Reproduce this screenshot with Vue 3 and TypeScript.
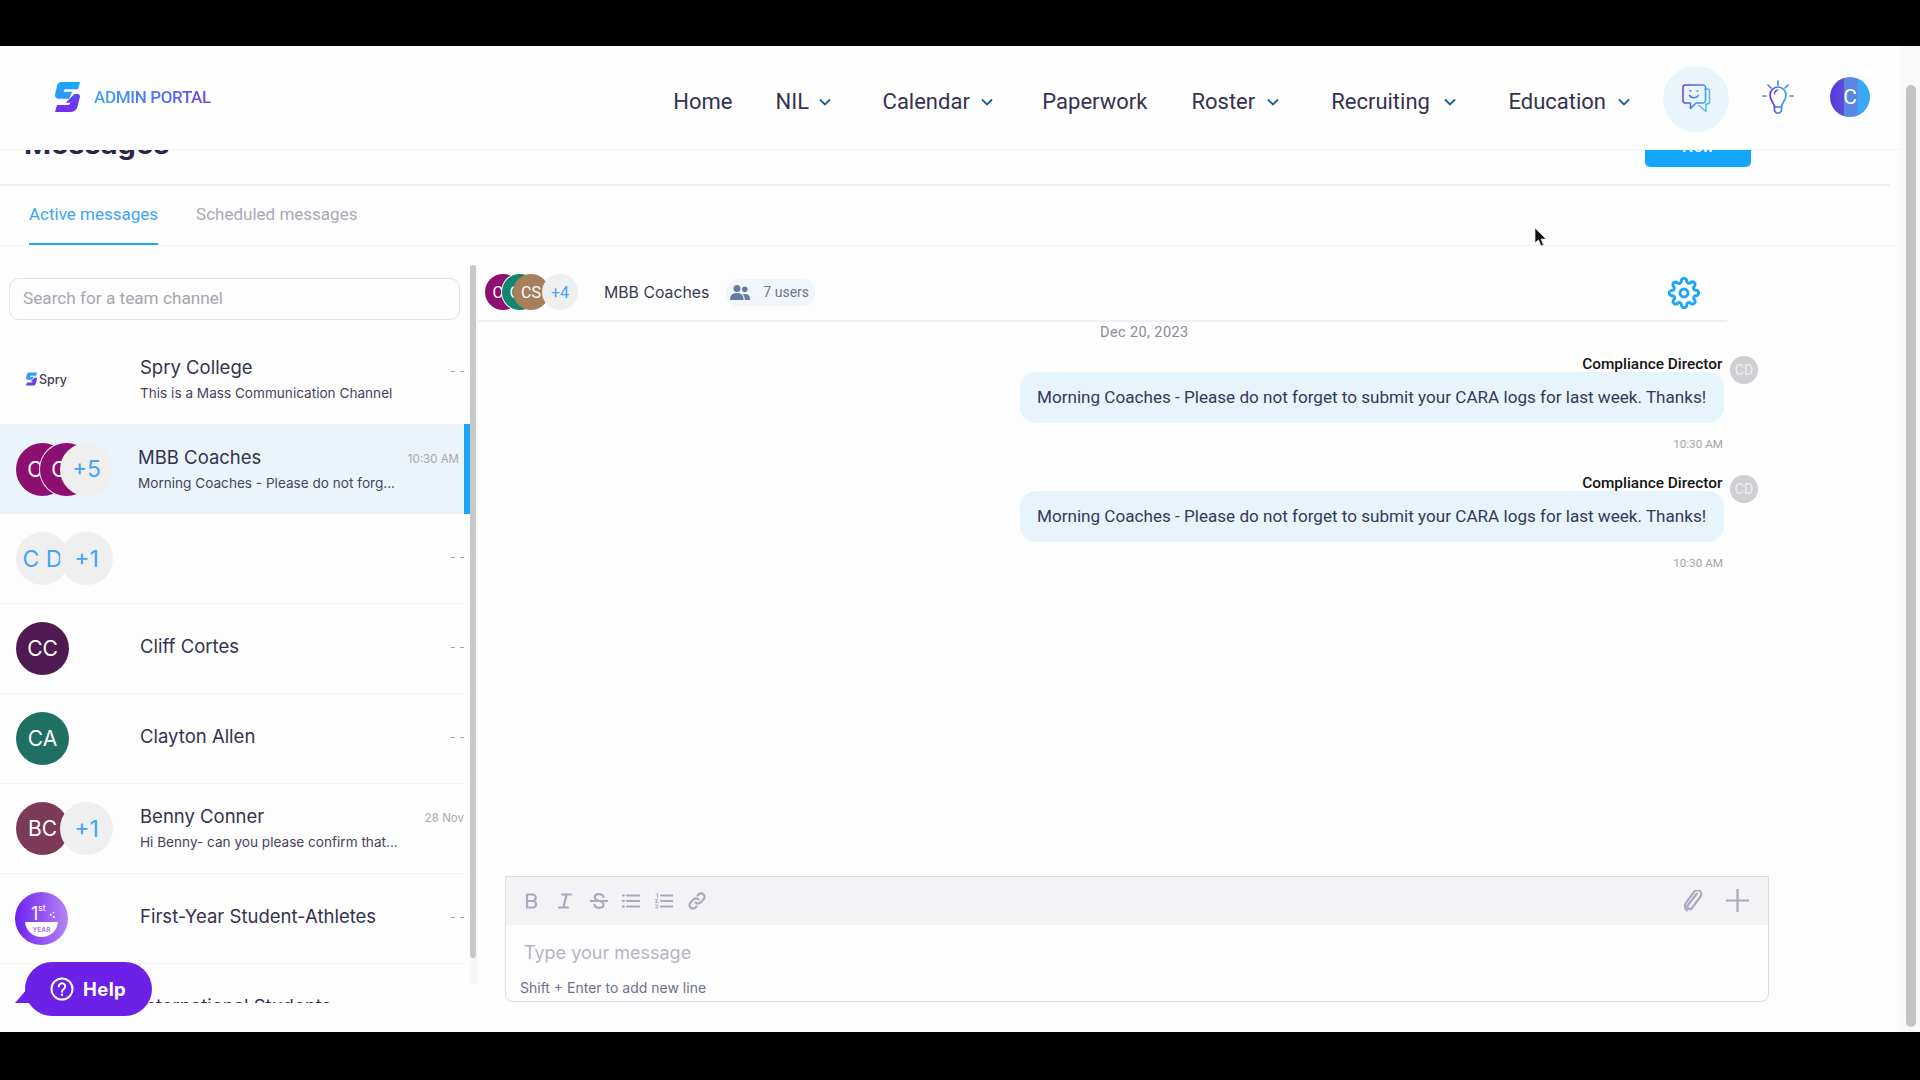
<script setup lang="ts">
interface Avatar {
  label: string
  color?: string
}

interface Channel {
  name: string
  sub?: string
  time?: string
  logo?: 'spry' | 'badge'
  active?: boolean
  avatars: Avatar[]
}

const navItems = [
  { label: 'Home', menu: false },
  { label: 'NIL', menu: true },
  { label: 'Calendar', menu: true },
  { label: 'Paperwork', menu: false },
  { label: 'Roster', menu: true },
  { label: 'Recruiting', menu: true },
  { label: 'Education', menu: true },
]

const channels: Channel[] = [
  { name: 'Spry College', sub: 'This is a Mass Communication Channel', logo: 'spry', avatars: [] },
  {
    name: 'MBB Coaches',
    sub: 'Morning Coaches - Please do not forg...',
    time: '10:30 AM',
    active: true,
    avatars: [{ label: 'CC', color: '#8e0f72' }, { label: 'CC', color: '#8e0f72' }, { label: '+5' }],
  },
  { name: '', avatars: [{ label: 'C D' }, { label: '+1' }] },
  { name: 'Cliff Cortes', avatars: [{ label: 'CC', color: '#4f1a52' }] },
  { name: 'Clayton Allen', avatars: [{ label: 'CA', color: '#1f6f63' }] },
  {
    name: 'Benny Conner',
    sub: 'Hi Benny- can you please confirm that...',
    time: '28 Nov',
    avatars: [{ label: 'BC', color: '#7d3a58' }, { label: '+1' }],
  },
  { name: 'First-Year Student-Athletes', logo: 'badge', avatars: [] },
  { name: 'International Students', avatars: [] },
]

const messages = [
  { author: 'Compliance Director', text: 'Morning Coaches - Please do not forget to submit your CARA logs for last week. Thanks!', time: '10:30 AM' },
  { author: 'Compliance Director', text: 'Morning Coaches - Please do not forget to submit your CARA logs for last week. Thanks!', time: '10:30 AM' },
]
</script>

<template>
  <div class="screen">
    <div class="screen__bar"></div>
    <div class="window">
      <div class="page">
        <header class="topnav">
          <div class="brand">
            <svg class="brand__logo" viewBox="0 0 75 90">
              <defs>
                <linearGradient id="logoA" x1="0" y1="0" x2="0" y2="1">
                  <stop offset="0" stop-color="#18a8f8" />
                  <stop offset="1" stop-color="#2f95f6" />
                </linearGradient>
                <linearGradient id="logoB" x1="0" y1="0" x2="0" y2="1">
                  <stop offset="0" stop-color="#5a4cf0" />
                  <stop offset="1" stop-color="#7a2bf0" />
                </linearGradient>
              </defs>
              <path fill="url(#logoA)" d="M20 0H75L69 22H32Q26 22 26 29H52L42 50H12Q0 50 0 38L6 12Q9 0 20 0Z" />
              <path fill="url(#logoB)" d="M58 36H70Q75 36 75 44L68 72Q64 90 44 90H0L6 69H40Q44 69 46 62H32Z" />
            </svg>
            <span class="brand__name">ADMIN PORTAL</span>
          </div>
          <nav class="topnav__links">
            <a v-for="item in navItems" :key="item.label" class="topnav__link" :class="{ 'topnav__link--menu': item.menu }">
              {{ item.label }}
              <svg v-if="item.menu" class="topnav__chevron" viewBox="0 0 12 8">
                <path d="M1 1.500l5 5 5-5" />
              </svg>
            </a>
          </nav>
          <div class="topnav__chat">
            <svg viewBox="0 0 29 29" width="29" height="29" fill="none" stroke-width="1.500" stroke-linejoin="round" stroke-linecap="round">
              <defs>
                <linearGradient id="chatA" x1="0" y1="0" x2="1" y2="0.400">
                  <stop offset="0" stop-color="#6a35e6" />
                  <stop offset="1" stop-color="#3f9cf2" />
                </linearGradient>
              </defs>
              <path stroke="#55b4f6" d="M23 5h2.500a2 2 0 0 1 2 2v11a2 2 0 0 1-2 2h-1.500v7.500L17 21.500" />
              <path stroke="url(#chatA)" d="M3 1h18a2.500 2.500 0 0 1 2.500 2.500v13a2.500 2.500 0 0 1-2.500 2.500H14L8.500 24.500V19H3a2 2 0 0 1-2-2V3a2 2 0 0 1 2-2z" />
              <path stroke="url(#chatA)" d="M7.500 11.500c2 3 7 3 9 0" />
              <circle cx="8.500" cy="7" r="1" fill="#6a6ae8" stroke="none" />
              <circle cx="15.500" cy="7" r="1" fill="#5a8aee" stroke="none" />
            </svg>
          </div>
          <svg class="topnav__bulb" viewBox="0 0 32 34" fill="none" stroke-width="1.700" stroke-linecap="round" stroke-linejoin="round">
            <defs>
              <linearGradient id="bulbA" gradientUnits="userSpaceOnUse" x1="8" y1="0" x2="24" y2="0">
                <stop offset="0" stop-color="#6a35e6" />
                <stop offset="1" stop-color="#3aa8f6" />
              </linearGradient>
            </defs>
            <path stroke="#3f8fe8" d="M16 1v4M6 5l3 3M26 5l-3 3M1 16h3M28 16h3" />
            <path stroke="url(#bulbA)" d="M12.500 27c0-4-4.500-6-4.500-12a8 8 0 0 1 16 0c0 6-4.500 8-4.500 12z" />
            <path stroke="url(#bulbA)" d="M12.500 27v4l2 2h3l2-2v-4" />
            <path stroke="#5a5ee8" d="M12.500 14c0-2 1-3.500 3-4" stroke-width="1.300" />
          </svg>
          <div class="topnav__user">C</div>
        </header>

        <div class="content">
          <div class="titlebar">
            <h1 class="titlebar__title">Messages</h1>
            <button class="titlebar__new">New</button>
          </div>

          <div class="tabs">
            <span class="tabs__tab tabs__tab--active">Active messages</span>
            <span class="tabs__tab">Scheduled messages</span>
          </div>

          <div class="inbox">
            <aside class="sidebar">
              <div class="sidebar__main">
                <div class="sidebar__search">Search for a team channel</div>
                <div class="sidebar__list">
                  <div
                    v-for="channel in channels"
                    :key="channel.name + channel.avatars.length"
                    class="channel"
                    :class="{ 'channel--active': channel.active }"
                  >
                    <div class="channel__media" :class="{ 'channel__media--three': channel.avatars.length === 3 }">
                      <div v-if="channel.logo === 'spry'" class="spry">
                        <svg viewBox="0 0 75 90" width="11" height="14">
                          <path fill="#2f9bf5" d="M20 0H75L69 22H32Q26 22 26 29H52L42 50H12Q0 50 0 38L6 12Q9 0 20 0Z" />
                          <path fill="#6a3de8" d="M58 36H70Q75 36 75 44L68 72Q64 90 44 90H0L6 69H40Q44 69 46 62H32Z" />
                        </svg>
                        <span>Spry</span>
                      </div>
                      <svg v-else-if="channel.logo === 'badge'" class="badge" viewBox="0 0 53 53">
                        <defs>
                          <linearGradient id="badgeA" x1="0" y1="0" x2="1" y2="0">
                            <stop offset="0" stop-color="#6f22ef" />
                            <stop offset="1" stop-color="#b583f6" />
                          </linearGradient>
                        </defs>
                        <circle cx="26.500" cy="26.500" r="26.500" fill="url(#badgeA)" />
                        <text x="16" y="28" class="badge__one">1</text>
                        <text x="23" y="19" class="badge__st">st</text>
                        <path d="M10 30h33c-1 9-8 15-16.500 15S11 39 10 30z" fill="#fff" />
                        <text x="26.500" y="40" class="badge__year">YEAR</text>
                        <path d="M35 22l1.500 1.500M38 20l1 1M38 24.500l1.500 1" stroke="#fff" stroke-width="1.600" />
                      </svg>
                      <div
                        v-for="(avatar, i) in channel.avatars"
                        :key="i"
                        class="avatar"
                        :class="{ 'avatar--plain': !avatar.color }"
                        :style="avatar.color ? { background: avatar.color } : undefined"
                      >
                        {{ avatar.label }}
                      </div>
                    </div>
                    <div class="channel__body" :class="{ 'channel__body--single': !channel.sub }">
                      <div class="channel__name">{{ channel.name }}</div>
                      <div v-if="channel.sub" class="channel__sub">{{ channel.sub }}</div>
                    </div>
                    <div class="channel__time" :class="{ 'channel__time--none': !channel.time }">{{ channel.time || '- -' }}</div>
                  </div>
                </div>
              </div>
              <div class="sidebar__scroll"><div class="sidebar__thumb"></div></div>
            </aside>

            <section class="thread">
              <div class="thread__head">
                <div class="stack">
                  <div class="stack__item" style="background: #8e0f72">CC</div>
                  <div class="stack__item" style="background: #11866d">CC</div>
                  <div class="stack__item" style="background: #a87f5c">CS</div>
                  <div class="stack__item stack__item--more">+4</div>
                </div>
                <span class="thread__title">MBB Coaches</span>
                <div class="thread__users">
                  <svg viewBox="0 0 20 15" width="20" height="15" fill="#667a9c">
                    <circle cx="7" cy="3.500" r="3.500" />
                    <circle cx="14.800" cy="4.200" r="2.800" />
                    <path d="M0 15c0-5 2.500-7 7-7s6.500 2 6.500 7z" />
                    <path d="M14.800 15H20c0-4-1.500-6-5-6-1 0-1.800.2-2.200.5 1.300 1.300 2 3 2 5.500z" />
                  </svg>
                  <span>7 users</span>
                </div>
                <svg class="thread__gear" viewBox="0 0 24 24" fill="none" stroke="#1ea7f8" stroke-width="2.200" stroke-linecap="round" stroke-linejoin="round">
                  <circle cx="12" cy="12" r="3" />
                  <path d="M19.400 15a1.650 1.650 0 0 0 .33 1.820l.06.06a2 2 0 0 1-2.830 2.830l-.06-.06a1.650 1.650 0 0 0-2.820 1.170V21a2 2 0 0 1-4 0v-.09A1.650 1.650 0 0 0 7.270 19.700l-.06.06a2 2 0 0 1-2.830-2.830l.06-.06a1.650 1.650 0 0 0-1.170-2.820H3a2 2 0 0 1 0-4h.09A1.650 1.650 0 0 0 4.300 7.270l-.06-.06a2 2 0 0 1 2.830-2.830l.06.06a1.650 1.650 0 0 0 1.820.33H9a1.650 1.650 0 0 0 1-1.510V3a2 2 0 0 1 4 0v.09a1.650 1.650 0 0 0 2.820 1.170l.06-.06a2 2 0 0 1 2.830 2.830l-.06.06a1.650 1.650 0 0 0-.33 1.820V9c.26.600.86 1 1.510 1H21a2 2 0 0 1 0 4h-.09c-.65 0-1.250.400-1.510 1z" />
                </svg>
              </div>

              <div class="thread__body">
                <div class="thread__date">Dec 20, 2023</div>
                <div v-for="(message, i) in messages" :key="i" class="message">
                  <div class="message__col">
                    <div class="message__author">{{ message.author }}</div>
                    <div class="message__bubble">{{ message.text }}</div>
                    <div class="message__time">{{ message.time }}</div>
                  </div>
                  <div class="message__avatar">CD</div>
                </div>
              </div>

              <div class="composer">
                <div class="composer__tools">
                  <svg class="tool" viewBox="0 0 14 16" width="14" height="16"><path d="M2 1.500h5.500a3.200 3.200 0 0 1 0 6.500H2zM2 8h6.300a3.300 3.300 0 0 1 0 6.500H2z" /></svg>
                  <svg class="tool" viewBox="0 0 14 16" width="14" height="16"><path d="M4 1.500h9M1 14.500h9M8.500 1.500l-3 13" /></svg>
                  <svg class="tool" viewBox="0 0 18 16" width="18" height="16"><path d="M0 8h18M13.500 4c-.5-1.800-2-2.800-4.500-2.800S4.800 2.500 4.800 4.500c0 4.500 8.700 2.500 8.700 7 0 2.200-2 3.300-4.500 3.300s-4-1-4.500-3" /></svg>
                  <svg class="tool" viewBox="0 0 18 16" width="18" height="16"><path d="M5 2.500h13M5 8h13M5 13.500h13M0 2.500h2M0 8h2M0 13.500h2" /></svg>
                  <svg class="tool" viewBox="0 0 18 16" width="18" height="16"><path d="M6 2.500h12M6 8h12M6 13.500h12" /><path d="M1 1h1.500v3.500M.5 6.500h2L.5 9.500h2.500M.5 12h2.500l-1 1.500 1 1.500H.5" stroke-width="1" /></svg>
                  <svg class="tool" viewBox="0 0 18 18" width="18" height="18"><path d="M7.500 10.500a3.500 3.500 0 0 0 5 0l3-3a3.500 3.500 0 0 0-5-5l-1 1M10.500 7.500a3.500 3.500 0 0 0-5 0l-3 3a3.500 3.500 0 0 0 5 5l1-1" /></svg>
                  <svg class="tool tool--clip" viewBox="0 0 20 22" width="20" height="22" stroke-width="1.300"><path d="M14 3.500L5 15a2.500 2.500 0 0 0 4 3l8.500-11.500a4 4 0 0 0-6.500-4.700L2.500 13.500a6 6 0 0 0 1.500 7" /></svg>
                  <svg class="tool tool--plus" viewBox="0 0 23 23" width="23" height="23" stroke-width="2.500"><path d="M11.500 0v23M0 11.500h23" /></svg>
                </div>
                <div class="composer__input">Type your message</div>
                <div class="composer__hint">Shift + Enter to add new line</div>
              </div>
            </section>
          </div>
        </div>
      </div>

      <div class="scrollbar"><div class="scrollbar__thumb"></div></div>

      <button class="help">
        <svg viewBox="0 0 24 24" width="24" height="24" fill="none" stroke="#fff" stroke-width="2">
          <circle cx="12" cy="12" r="10.500" />
          <path d="M8.800 9.500a3.200 3.200 0 1 1 4.900 2.700c-1 .6-1.700 1.200-1.700 2.500" stroke-linecap="round" />
          <circle cx="12" cy="17.800" r="1.200" fill="#fff" stroke="none" />
        </svg>
        <span>Help</span>
      </button>

      <svg class="cursor" viewBox="0 0 14 20" width="14" height="20">
        <path d="M1 0v15l3.500-3.200L7 18l2.500-1L7 11h5z" fill="#111" stroke="#ddd" stroke-width="0.800" />
      </svg>
    </div>
    <div class="screen__bar screen__bar--bottom"></div>
  </div>
</template>

<style>
html,
body {
  margin: 0;
  background: #000;
}
</style>

<style scoped>
.screen {
  display: flex;
  flex-direction: column;
  width: 1920px;
  height: 1080px;
  overflow: hidden;
  background: #000;
  font-family: Roboto, "Liberation Sans", sans-serif;
  color: #2f2c4a;
}

.screen__bar {
  flex: 0 0 46px;
  background: #000;
}

.screen__bar--bottom {
  flex-basis: 48px;
}

.window {
  position: relative;
  display: flex;
  flex: 1;
  min-height: 0;
  background: #fdfdfd;
}

.page {
  display: flex;
  flex-direction: column;
  flex: 1;
  min-width: 0;
}

.topnav {
  position: relative;
  z-index: 2;
  display: flex;
  align-items: center;
  flex: 0 0 104px;
  box-sizing: border-box;
  padding: 0 30px 0 55px;
  background: #fefefe;
  border-bottom: 1px solid #f4f4f4;
}

.brand {
  display: flex;
  align-items: center;
  gap: 14px;
  margin-top: -2px;
}

.brand__logo {
  width: 25px;
  height: 30px;
}

.brand__name {
  font-size: 17px;
  font-weight: 500;
  letter-spacing: -0.35px;
  background: linear-gradient(90deg, #3aa6f5, #6a45e8);
  -webkit-background-clip: text;
  background-clip: text;
  color: transparent;
}

.topnav__links {
  display: flex;
  align-items: center;
  gap: 44px;
  margin-left: auto;
  margin-top: 8px;
}

.topnav__link {
  display: flex;
  align-items: center;
  gap: 12px;
  font-size: 22px;
  color: #35324f;
}

.topnav__link--menu {
  padding-right: 8px;
}

.topnav__link:nth-child(1) {
  margin-right: -1px;
}

.topnav__link:nth-child(2) {
  gap: 10px;
  padding-right: 7.500px;
}

.topnav__link:nth-child(3) {
  gap: 11px;
  padding-right: 5.500px;
}

.topnav__link:nth-child(6) {
  gap: 14px;
  padding-right: 8.500px;
}

.topnav__chevron {
  width: 12px;
  height: 8px;
  fill: none;
  stroke: #1d5f8a;
  stroke-width: 1.800;
}

.topnav__chat {
  display: flex;
  align-items: center;
  justify-content: center;
  width: 66px;
  height: 66px;
  margin-left: 25px;
  margin-top: 2px;
  border-radius: 50%;
  background: #e9f4fb;
}

.topnav__bulb {
  width: 32px;
  height: 34px;
  margin-left: 33px;
  margin-top: -1px;
}

.topnav__user {
  display: flex;
  align-items: center;
  justify-content: center;
  width: 40px;
  height: 40px;
  margin-left: 36px;
  margin-top: -2px;
  border-radius: 50%;
  background: linear-gradient(90deg, #5a36d8 0%, #5a4fdc 35%, #5b86e4 36%, #5b86e4 68%, #39a8f6 70%);
  color: #fff;
  font-size: 21px;
}

.content {
  display: flex;
  flex-direction: column;
  flex: 1;
  min-height: 0;
  overflow: hidden;
}

.titlebar {
  display: flex;
  justify-content: space-between;
  flex: 0 0 36px;
  box-sizing: border-box;
  margin-right: 10px;
  padding: 0 139px 0 24px;
  border-bottom: 2px solid #f1f1f1;
}

.titlebar__title {
  margin: -25px 0 0;
  font-family: Inter, sans-serif;
  font-size: 29px;
  font-weight: 700;
  line-height: 38px;
  color: #2b2745;
}

.titlebar__new {
  width: 106px;
  height: 47px;
  margin-top: -30px;
  padding: 6px 0 0;
  border: 0;
  border-radius: 5px;
  background: #12a5fb;
  color: #fff;
  font-family: inherit;
  font-size: 16px;
  font-weight: 500;
}

.tabs {
  display: flex;
  gap: 38px;
  flex: 0 0 59px;
  box-sizing: border-box;
  padding-left: 29px;
  border-bottom: 1px solid #f5f5f5;
}

.tabs__tab {
  box-sizing: border-box;
  height: 59px;
  padding-top: 18px;
  font-size: 17px;
  line-height: 20px;
  color: #a9a9b6;
}

.tabs__tab--active {
  color: #3fa5f0;
  border-bottom: 2.500px solid #1ea7f8;
}

.inbox {
  display: flex;
  flex: 1;
  min-height: 0;
}

.sidebar {
  display: flex;
  flex: 0 0 478px;
}

.sidebar__main {
  flex: 0 0 470px;
  padding-top: 32px;
}

.sidebar__search {
  box-sizing: border-box;
  width: 451px;
  height: 42px;
  margin-left: 9px;
  padding-left: 13px;
  border: 1px solid #e2e2e8;
  border-radius: 10px;
  font-size: 17.200px;
  line-height: 38px;
  color: #a6a6af;
}

.sidebar__list {
  height: 669px;
  margin-top: 14px;
  overflow: hidden;
}

.channel {
  position: relative;
  display: flex;
  align-items: center;
  box-sizing: border-box;
  width: 465px;
  height: 90px;
  border-bottom: 1px solid #f4f4f4;
  font-family: Inter, sans-serif;
}

.channel--active {
  width: 470px;
  padding-right: 5px;
  background: #ebf4fb;
  border-bottom: 0;
  border-right: 6px solid #1ea7f8;
}

.channel:first-child {
  border-bottom: 0;
}

.channel__media {
  display: flex;
  align-items: center;
  flex: 0 0 124px;
  box-sizing: border-box;
  padding-left: 16px;
}

.avatar {
  position: relative;
  display: flex;
  align-items: center;
  justify-content: center;
  flex: 0 0 53px;
  height: 53px;
  border-radius: 50%;
  font-size: 21px;
  color: #fff;
  white-space: nowrap;
}

.avatar + .avatar {
  margin-left: -9px;
}

.channel__media--three .avatar:nth-child(2) {
  margin-left: -29px;
  box-shadow: 0 0 0 1px #f2e6f0;
}

.channel__media--three .avatar:nth-child(3) {
  margin-left: -33px;
}

.avatar--plain {
  background: #efefef;
  color: #42a5f5;
  font-size: 23px;
}

.spry {
  display: flex;
  align-items: center;
  gap: 2px;
  margin-left: 10px;
  font-size: 12.500px;
  font-weight: 500;
  color: #3d3a55;
}

.badge {
  width: 53px;
  height: 53px;
  margin-left: -1px;
}

.badge__one {
  font-size: 18px;
  fill: #fff;
  font-family: Inter, sans-serif;
}

.badge__st {
  font-size: 9px;
  fill: #fff;
}

.badge__year {
  font-size: 6.500px;
  font-weight: 700;
  fill: #a878f2;
  text-anchor: middle;
}

.channel__body {
  flex: 1;
  min-width: 0;
  padding-left: 16px;
  margin-top: -1px;
}

.channel__body--single {
  margin-top: -6px;
}

.channel--active .channel__body {
  padding-left: 14px;
}

.channel__name {
  font-size: 18.500px;
  line-height: 24px;
  color: #35324f;
}

.channel__sub {
  margin-top: 4px;
  font-size: 13.600px;
  line-height: 20px;
  color: #45435c;
  white-space: nowrap;
}

.channel__time {
  position: absolute;
  top: 27px;
  right: 1px;
  font-size: 11.500px;
  color: #a9a9a9;
}

.channel--active .channel__time {
  right: 5px;
  top: 28px;
}

.channel__time--none {
  top: 35px;
  right: 0;
  font-size: 12.500px;
}

.channel:first-child .channel__time--none {
  top: 29px;
}

.sidebar__scroll {
  flex: 0 0 8px;
  height: 719px;
  margin-top: 19px;
  background: #f7f7f7;
}

.sidebar__thumb {
  width: 6px;
  height: 693px;
  border-radius: 3px;
  background: #c8c8c8;
}

.thread {
  display: flex;
  flex-direction: column;
  flex: 1;
  min-width: 0;
}

.thread__head {
  display: flex;
  align-items: center;
  box-sizing: border-box;
  width: 1249px;
  flex: 0 0 76px;
  padding: 18px 27px 0 7px;
  border-bottom: 2px solid #f0f0f0;
}

.stack {
  display: flex;
  width: 119px;
}

.stack__item {
  display: flex;
  align-items: center;
  justify-content: center;
  width: 36px;
  height: 36px;
  margin-left: -25px;
  border-radius: 50%;
  font-size: 16px;
  color: #fff;
  white-space: nowrap;
}

.stack__item:first-child {
  margin-left: 0;
}

.stack__item:nth-child(2) {
  margin-left: -19px;
  box-shadow: 0 0 0 1px #fff;
}

.stack__item--more {
  margin-left: -7px !important;
  background: #efefef;
  color: #42a5f5;
}

.thread__title {
  font-family: Inter, sans-serif;
  font-size: 15.800px;
  color: #3a3a55;
}

.thread__users {
  display: flex;
  align-items: center;
  gap: 13px;
  height: 27px;
  margin-left: 17px;
  padding: 0 6px 0 4px;
  border-radius: 12px;
  background: #f1f6fa;
  font-size: 14px;
  color: #73738a;
}

.thread__gear {
  width: 32px;
  height: 32px;
  margin-left: auto;
  margin-top: 2px;
}

.thread__body {
  flex: 1;
  min-height: 0;
  width: 1280px;
}

.thread__date {
  height: 21px;
  margin-left: 622px;
  font-size: 14.500px;
  line-height: 21px;
  letter-spacing: 0.4px;
  color: #8a8a9a;
}

.message {
  display: flex;
  justify-content: flex-end;
  gap: 6px;
  margin-top: 13px;
  margin-bottom: 23px;
}

.message + .message {
  margin-top: 0;
}

.message__col {
  display: flex;
  flex-direction: column;
  align-items: flex-end;
}

.message__author {
  padding-right: 1.500px;
  font-size: 15.400px;
  font-weight: 500;
  line-height: 16px;
  color: #151515;
}

.message__bubble {
  box-sizing: border-box;
  width: 704px;
  height: 51px;
  padding-left: 17px;
  border-radius: 16px;
  background: #e8f4fb;
  font-size: 17.100px;
  line-height: 51px;
  color: #33395a;
  white-space: nowrap;
}

.message__time {
  height: 16px;
  margin-top: 13px;
  padding-right: 1px;
  font-size: 11.700px;
  line-height: 16px;
  color: #a5a5a5;
}

.message__avatar {
  display: flex;
  align-items: center;
  justify-content: center;
  width: 28px;
  height: 28px;
  border-radius: 50%;
  background: #cfcfd3;
  color: #eee;
  font-size: 14px;
}

.composer {
  flex: 0 0 126px;
  box-sizing: border-box;
  width: 1264px;
  margin: 0 0 30px 27px;
  border: 1px solid #dcdce6;
  border-radius: 0 0 8px 8px;
}

.composer__tools {
  display: flex;
  align-items: center;
  gap: 15px;
  height: 48px;
  padding: 0 19px 0 19px;
  background: #f3f3f6;
}

.tool {
  fill: none;
  stroke: #aaaabf;
  stroke-width: 2.200;
  stroke-linecap: round;
  stroke-linejoin: round;
}

.tool:nth-child(2) {
  margin-left: 4px;
}

.tool:nth-child(3) {
  margin-left: 3px;
}

.tool:nth-child(4) {
  margin-left: -1px;
}

.tool--clip {
  margin-left: auto;
}

.tool--plus {
  margin-left: 8px;
  margin-top: -2px;
}

.composer__input {
  height: 28px;
  margin-top: 14px;
  padding-left: 18px;
  font-family: Inter, sans-serif;
  font-size: 18px;
  line-height: 28px;
  color: #b5b5c2;
}

.composer__hint {
  margin-top: 12px;
  padding-left: 14px;
  font-family: Inter, sans-serif;
  font-size: 14px;
  line-height: 18px;
  color: #6f6f8f;
}

.scrollbar {
  flex: 0 0 20px;
  padding: 39px 4px 0 6px;
  box-sizing: border-box;
  background: #f9f9f9;
}

.scrollbar__thumb {
  height: 942px;
  border-radius: 5px;
  background: #c4c4c4;
}

.help {
  position: absolute;
  left: 25px;
  top: 916px;
  z-index: 3;
  display: flex;
  align-items: center;
  gap: 9px;
  width: 127px;
  height: 54px;
  padding: 0 0 0 25px;
  border: 0;
  border-radius: 27px;
  background: #6b21e8;
  color: #fff;
  font-family: Inter, sans-serif;
  font-size: 18.500px;
  font-weight: 700;
  letter-spacing: 0.4px;
}

.help::before {
  content: "";
  position: absolute;
  left: -10px;
  bottom: 13px;
  width: 0;
  height: 0;
  border-bottom: 14px solid #6b21e8;
  border-left: 12px solid transparent;
  border-right: 6px solid transparent;
}

.cursor {
  position: absolute;
  left: 1534px;
  top: 182px;
  z-index: 4;
}
</style>
